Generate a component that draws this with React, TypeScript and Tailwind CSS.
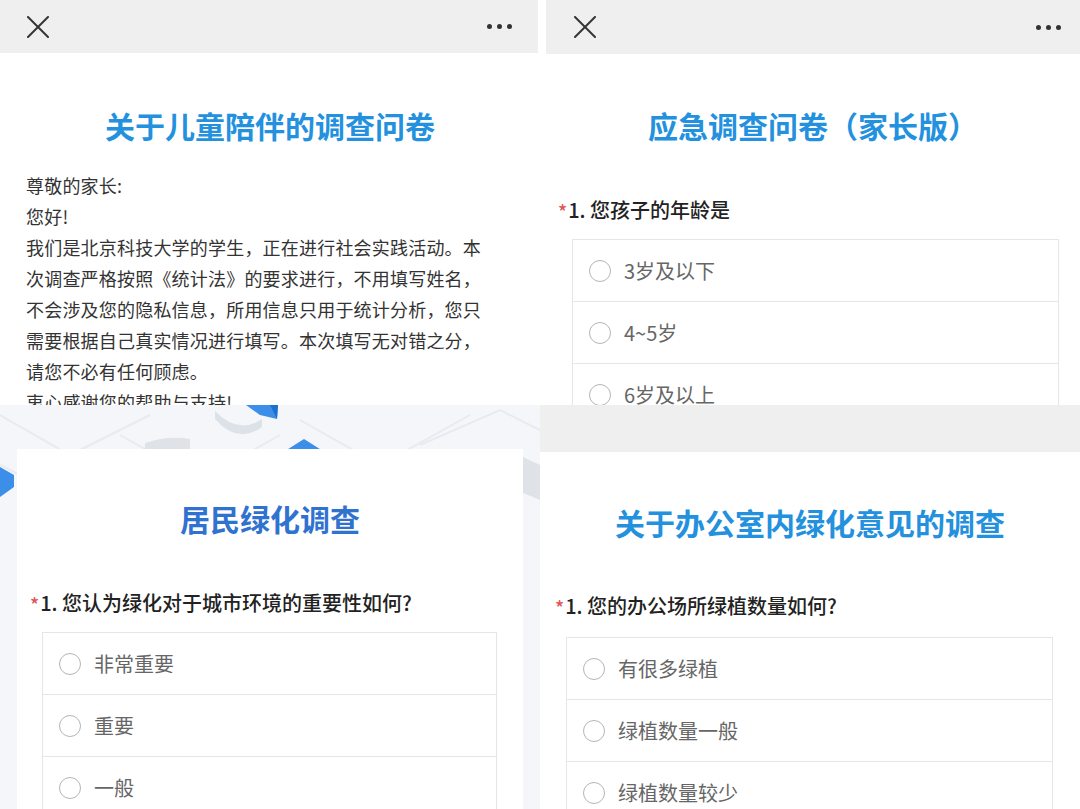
import React from 'react';

const font = { fontFamily: '"Noto Sans CJK SC", "Noto Sans", sans-serif' };

function CloseIcon() {
  return (
    <svg width="22" height="22" viewBox="0 0 22 22">
      <line x1="1" y1="1" x2="21" y2="21" stroke="#333" strokeWidth="2" strokeLinecap="round" />
      <line x1="21" y1="1" x2="1" y2="21" stroke="#333" strokeWidth="2" strokeLinecap="round" />
    </svg>
  );
}

function Dots() {
  return (
    <div className="flex items-center gap-[5px]">
      <span className="h-[5px] w-[5px] rounded-full bg-[#333]" />
      <span className="h-[5px] w-[5px] rounded-full bg-[#333]" />
      <span className="h-[5px] w-[5px] rounded-full bg-[#333]" />
    </div>
  );
}

function Options({ items, className }: { items: string[]; className: string }) {
  return (
    <div className={`border border-[#e6e6e6] ${className}`}>
      {items.map((item, i) => (
        <div
          key={item}
          className={`flex h-[62px] items-center pl-[16px] ${i < items.length - 1 ? 'border-b border-[#e6e6e6]' : ''}`}
        >
          <span className="h-[22px] w-[22px] shrink-0 rounded-full border-[1.5px] border-[#b5b5b5]" />
          <span className="ml-[13px] text-[20px] leading-[28px] text-[#666]">{item}</span>
        </div>
      ))}
    </div>
  );
}

function Question({ text, className }: { text: string; className: string }) {
  return (
    <div className={`flex items-center text-[20px] leading-[28px] font-medium text-[#222] ${className}`}>
      <span className="mr-[1px] text-[19px] leading-[19px] text-[#e05555]">*</span>
      <span>1. {text}</span>
    </div>
  );
}

function Backdrop() {
  return (
    <svg className="absolute inset-0" width="540" height="404" viewBox="0 0 540 404">
      <g stroke="#e7ebf1" strokeWidth="2" fill="none">
        <path d="M0 10 L70 50 L150 10" />
        <path d="M120 30 L200 75 L280 30" />
        <path d="M300 15 L380 60 L470 10" />
        <path d="M420 40 L500 5 L540 25" />
        <path d="M0 60 L40 80" />
      </g>
      <path d="M215 6 Q238 30 262 14 L262 22 Q238 40 215 14 Z" fill="#dde2e9" />
      <path d="M246 0 L278 0 L277 14 L260 10 Z" fill="#3b8fe8" />
      <path d="M270 0 L278 0 L277 14 Z" fill="#1f6fcf" />
      <path d="M145 38 Q168 30 190 34 L190 50 L145 50 Z" fill="#dfe3e8" />
      <path d="M285 46 L304 34 L323 46 Z" fill="#3b8fe8" />
      <path d="M0 62 L14 70 L14 82 L0 92 Z" fill="#3b8fe8" />
      <path d="M523 52 L540 60 L540 95 L523 88 Z" fill="#dfe3e8" />
    </svg>
  );
}

export default function App() {
  const intro = [
    '尊敬的家长:',
    '您好!',
    '我们是北京科技大学的学生，正在进行社会实践活动。本',
    '次调查严格按照《统计法》的要求进行，不用填写姓名，',
    '不会涉及您的隐私信息，所用信息只用于统计分析，您只',
    '需要根据自己真实情况进行填写。本次填写无对错之分，',
    '请您不必有任何顾虑。',
    '衷心感谢您的帮助与支持!',
  ];

  return (
    <div className="flex h-[809px] w-[1080px] overflow-hidden bg-white" style={font}>
      {/* left column */}
      <div className="flex w-[540px] flex-col">
        <div className="h-[405px] shrink-0 overflow-hidden bg-white">
          <div className="flex h-[53px] w-[538px] items-center justify-between bg-[#efefef] pl-[27px] pr-[26px]">
            <CloseIcon />
            <Dots />
          </div>
          <h1 className="pt-[52px] text-center text-[30px] leading-[40px] font-bold text-[#2391de]">
            关于儿童陪伴的调查问卷
          </h1>
          <div className="mt-[25px] px-[26px] text-[18px] leading-[31px] tracking-[0.2px] text-[#333]">
            {intro.map((line) => (
              <div key={line} className="whitespace-nowrap">
                {line}
              </div>
            ))}
          </div>
        </div>

        <div className="relative h-[404px] shrink-0 overflow-hidden bg-[#f4f6fa] px-[17px] pt-[44px]">
          <Backdrop />
          <div className="relative h-full bg-white">
            <h1 className="pt-[49px] text-center text-[30px] leading-[40px] font-bold text-[#2f72d0]">
              居民绿化调查
            </h1>
            <Question text="您认为绿化对于城市环境的重要性如何?" className="mt-[51px] pl-[13px]" />
            <Options items={['非常重要', '重要', '一般']} className="mt-[15px] ml-[25px] mr-[26px]" />
          </div>
        </div>
      </div>

      {/* right column */}
      <div className="flex w-[540px] flex-col">
        <div className="h-[405px] shrink-0 overflow-hidden bg-white pl-[6px]">
          <div className="flex h-[54px] items-center justify-between bg-[#efefef] pl-[28px] pr-[19px]">
            <CloseIcon />
            <Dots />
          </div>
          <h1 className="pt-[51px] text-center text-[30px] leading-[40px] font-bold text-[#2391de]">
            应急调查问卷（家长版）
          </h1>
          <Question text="您孩子的年龄是" className="mt-[51px] pl-[12px]" />
          <Options items={['3岁及以下', '4~5岁', '6岁及以上']} className="mt-[15px] ml-[26px] mr-[21px]" />
        </div>

        <div className="h-[47px] shrink-0 bg-[#efefef]" />
        <div className="flex-1 bg-white">
          <h1 className="pt-[50px] text-center text-[30px] leading-[40px] font-bold text-[#2391de]">
            关于办公室内绿化意见的调查
          </h1>
          <Question text="您的办公场所绿植数量如何?" className="mt-[50px] pl-[15px]" />
          <Options items={['有很多绿植', '绿植数量一般', '绿植数量较少']} className="mt-[17px] ml-[26px] mr-[27px]" />
        </div>
      </div>
    </div>
  );
}
